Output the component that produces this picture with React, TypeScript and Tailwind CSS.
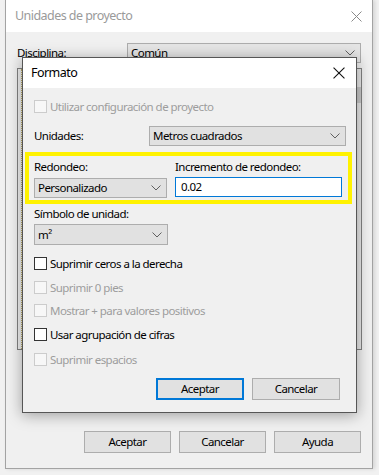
import React from 'react';

const font = "font-['Segoe_UI','Noto_Sans',sans-serif]";

function Chevron({ color = '#606060' }: { color?: string }) {
  return (
    <svg width="10" height="6" viewBox="0 0 10 6" fill="none">
      <path d="M0.5 0.5 L5 5 L9.5 0.5" stroke={color} strokeWidth="1" />
    </svg>
  );
}

function CloseX({ color, size = 11 }: { color: string; size?: number }) {
  return (
    <svg width={size} height={size} viewBox="0 0 11 11" fill="none">
      <path d="M0.5 0.5 L10.5 10.5 M10.5 0.5 L0.5 10.5" stroke={color} strokeWidth="1" />
    </svg>
  );
}

function Combo({ text, className }: { text: string; className: string }) {
  return (
    <div
      className={`flex items-center justify-between h-[20px] bg-[#e1e1e1] border border-[#adadad] pl-[3px] pr-[5px] ${className}`}
    >
      <span className="leading-[16px]">{text}</span>
      <Chevron />
    </div>
  );
}

function Check({ label, disabled, className = '' }: { label: string; disabled?: boolean; className?: string }) {
  return (
    <div className={`flex items-center h-[13px] ${className}`}>
      <div
        className={`shrink-0 w-[13px] h-[13px] border ${
          disabled ? 'border-[#cccccc] bg-[#f7f7f7]' : 'border-[#333333] bg-white'
        }`}
      />
      <span className={`ml-[3px] leading-[16px] ${disabled ? 'text-[#9d9d9d]' : 'text-black'}`}>{label}</span>
    </div>
  );
}

function Button({ label, primary }: { label: string; primary?: boolean }) {
  return (
    <div
      className={`w-[88px] h-[22px] flex items-center justify-center bg-[#e1e1e1] ${
        primary ? 'border-2 border-[#0078d7]' : 'border border-[#adadad]'
      }`}
    >
      {label}
    </div>
  );
}

export default function App() {
  return (
    <div
      className={`relative w-[379px] h-[475px] bg-[#f1f1f1] overflow-hidden text-[11.5px] tracking-[-0.55px] text-black ${font}`}
    >
      {/* Unidades de proyecto */}
      <div className="ml-[5px] w-[368px] h-[469px] border-x border-b border-[#a3a3a3] bg-[#f0f0f0] flex flex-col shadow-[2px_0_4px_rgba(0,0,0,0.12)]">
        <div className="h-[32px] bg-white flex items-center justify-between pl-[9px] pr-[10px]">
          <span className="text-[12.5px] text-[#9a9a9a]">Unidades de proyecto</span>
          <CloseX color="#8a8a8a" />
        </div>
        <div className="flex-1 flex flex-col px-[11px]">
          <div className="mt-[11px] flex items-center h-[20px]">
            <span className="w-[110px] leading-[16px]">Disciplina:</span>
            <Combo text="Común" className="w-[234px] bg-[#e5e5e5]" />
          </div>
          <div className="mt-[5px] h-[282px] w-[345px] border border-[#828282] bg-[#f0f0f0] flex">
            <div className="w-[4px] border-r border-dotted border-[#b8a860]" />
            <div className="flex-1" />
            <div className="w-[5px] bg-[#e8e8e8] flex flex-col">
              <div className="mt-[18px] h-[16px] bg-[#c8c8c8]" />
            </div>
          </div>
          <div className="mt-auto mb-[15px] flex justify-end gap-[8px] [&>div]:w-[87px]">
            <Button label="Aceptar" />
            <Button label="Cancelar" />
            <Button label="Ayuda" />
          </div>
        </div>
      </div>

      {/* Formato (modal over the main dialog) */}
      <div className="absolute left-[22px] top-[57px] w-[335px] border border-[#565656] bg-[#f0f0f0] shadow-[0_2px_14px_rgba(0,0,0,0.35)]">
        <div className="h-[30px] bg-white flex items-center justify-between pl-[8px] pr-[11px]">
          <span className="text-[12.5px]">Formato</span>
          <CloseX color="#111111" size={12} />
        </div>
        <div className="flex flex-col pl-[11px] pr-[10px] pb-[12px]">
          <Check className="mt-[12px]" label="Utilizar configuración de proyecto" disabled />

          <div className="mt-[13px] flex items-center">
            <span className="w-[115px] leading-[16px]">Unidades:</span>
            <Combo text="Metros cuadrados" className="w-[197px]" />
          </div>

          <div className="mt-[6px] -ml-[9px] w-[327px] border-[4px] border-[#fff200] pl-[5px] pt-[3px] pb-[2px] flex gap-[8px]">
            <div className="flex flex-col w-[133px]">
              <span className="leading-[16px]">Redondeo:</span>
              <Combo text="Personalizado" className="mt-[3px] w-[133px]" />
            </div>
            <div className="flex flex-col w-[167px]">
              <span className="leading-[16px]">Incremento de redondeo:</span>
              <div className="mt-[2px] h-[20px] w-[167px] bg-white border border-[#0078d7] flex items-center pl-[5px] leading-[16px]">
                0.02
              </div>
            </div>
          </div>

          <span className="mt-[2px] leading-[16px]">Símbolo de unidad:</span>
          <Combo text="m²" className="mt-[2px] w-[134px] h-[21px]" />

          <Check className="mt-[12px]" label="Suprimir ceros a la derecha" />
          <Check className="mt-[11px]" label="Suprimir 0 pies" disabled />
          <Check className="mt-[10px]" label="Mostrar + para valores positivos" disabled />
          <Check className="mt-[11px]" label="Usar agrupación de cifras" />
          <Check className="mt-[12px]" label="Suprimir espacios" disabled />

          <div className="mt-[12px] flex justify-end gap-[8px] pr-[6px]">
            <Button label="Aceptar" primary />
            <Button label="Cancelar" />
          </div>
        </div>
      </div>
    </div>
  );
}
